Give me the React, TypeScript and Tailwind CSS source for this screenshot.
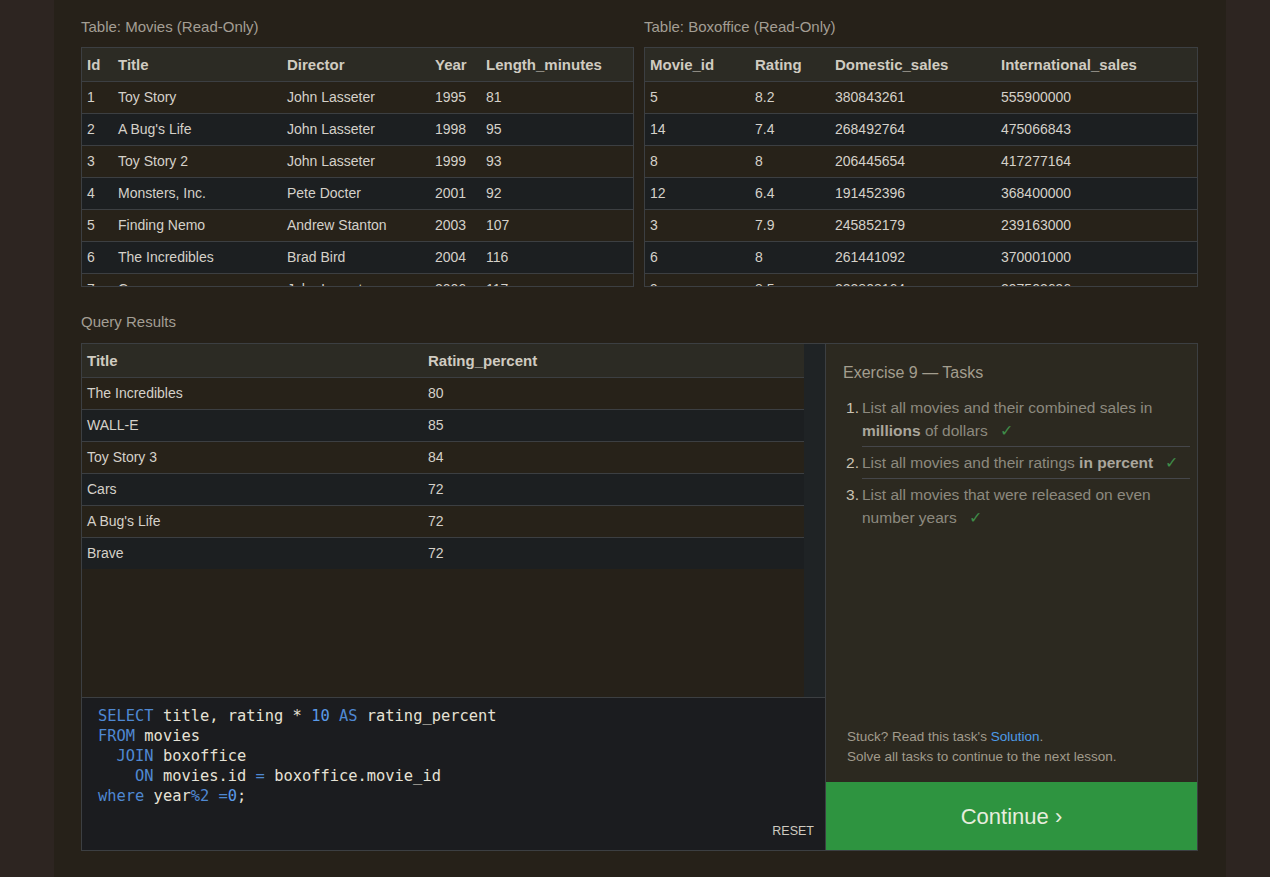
import React from "react";

type Row = (string | number)[];

const movies: Row[] = [
  [1, "Toy Story", "John Lasseter", 1995, 81],
  [2, "A Bug's Life", "John Lasseter", 1998, 95],
  [3, "Toy Story 2", "John Lasseter", 1999, 93],
  [4, "Monsters, Inc.", "Pete Docter", 2001, 92],
  [5, "Finding Nemo", "Andrew Stanton", 2003, 107],
  [6, "The Incredibles", "Brad Bird", 2004, 116],
  [7, "Cars", "John Lasseter", 2006, 117],
];

const boxoffice: Row[] = [
  [5, 8.2, 380843261, 555900000],
  [14, 7.4, 268492764, 475066843],
  [8, 8, 206445654, 417277164],
  [12, 6.4, 191452396, 368400000],
  [3, 7.9, 245852179, 239163000],
  [6, 8, 261441092, 370001000],
  [9, 8.5, 223808164, 297503696],
];

const results: Row[] = [
  ["The Incredibles", 80],
  ["WALL-E", 85],
  ["Toy Story 3", 84],
  ["Cars", 72],
  ["A Bug's Life", 72],
  ["Brave", 72],
];

function DataTable({
  headers,
  rows,
  cols,
}: {
  headers: string[];
  rows: Row[];
  cols: string;
}) {
  return (
    <div className="text-[14px] text-[#d5d1c9]">
      <div className={`grid ${cols} h-[33px] items-center bg-[#2c2b24] pt-[1px] text-[15px] font-bold text-[#d0cbc1]`}>
        {headers.map((h) => (
          <div key={h} className="pl-[5px] whitespace-nowrap">
            {h}
          </div>
        ))}
      </div>
      {rows.map((r, i) => (
        <div
          key={i}
          className={`grid ${cols} h-[32px] items-center border-t border-[#3c3f42] ${
            i % 2 === 0 ? "bg-[#272219]" : "bg-[#1c1f21]"
          }`}
        >
          {r.map((c, j) => (
            <div key={j} className="pl-[5px] whitespace-nowrap">
              {c}
            </div>
          ))}
        </div>
      ))}
    </div>
  );
}

function Check() {
  return <span className="ml-[12px] text-[#3f8c48]">✓</span>;
}

export default function App() {
  return (
    <div
      className="min-h-screen bg-[#2d2521]"
      style={{ fontFamily: '"Liberation Sans", Arial, sans-serif' }}
    >
      <div className="ml-[54px] w-[1172px] min-h-[877px] bg-[#262119] pl-[27px] pr-[28px] pt-[17px]">
        {/* source tables */}
        <div className="flex gap-[10px]">
          <div className="w-[553px]">
            <div className="h-[20px] leading-[20px] text-[15px] text-[#a39e94] mb-[10px]">
              Table: Movies (Read-Only)
            </div>
            <div className="h-[240px] overflow-hidden border border-[#3c3f42]">
              <DataTable
                headers={["Id", "Title", "Director", "Year", "Length_minutes"]}
                rows={movies}
                cols="grid-cols-[31px_169px_148px_51px_1fr]"
              />
            </div>
          </div>
          <div className="w-[554px]">
            <div className="h-[20px] leading-[20px] text-[15px] text-[#a39e94] mb-[10px]">
              Table: Boxoffice (Read-Only)
            </div>
            <div className="h-[240px] overflow-hidden border border-[#3c3f42]">
              <DataTable
                headers={["Movie_id", "Rating", "Domestic_sales", "International_sales"]}
                rows={boxoffice}
                cols="grid-cols-[105px_80px_166px_1fr]"
              />
            </div>
          </div>
        </div>

        {/* query results */}
        <div className="mt-[25px] h-[20px] leading-[20px] text-[15px] text-[#a39e94] mb-[11px]">
          Query Results
        </div>
        <div className="flex h-[508px] w-[1117px]">
          <div className="flex w-[744px] flex-col border-l border-t border-b border-[#3c3f42]">
            <div className="flex flex-1 min-h-0">
              <div className="flex-1 overflow-hidden">
                <DataTable
                  headers={["Title", "Rating_percent"]}
                  rows={results}
                  cols="grid-cols-[341px_1fr]"
                />
              </div>
              <div className="w-[21px] bg-[#1f2325]" />
            </div>
            <div className="relative h-[153px] border-t border-[#3c3f42] bg-[#1b1c1f] pl-[16px] pt-[8px]">
              <pre
                className="text-[15.4px] leading-[20px] text-[#e6e2d6]"
                style={{ fontFamily: '"DejaVu Sans Mono", "Liberation Mono", monospace' }}
              >
                <span className="text-[#4f88d2]">SELECT</span> title, rating *{" "}
                <span className="text-[#5a9ae8]">10</span>{" "}
                <span className="text-[#4f88d2]">AS</span> rating_percent
                {"\n"}
                <span className="text-[#4f88d2]">FROM</span> movies
                {"\n  "}
                <span className="text-[#4f88d2]">JOIN</span> boxoffice
                {"\n    "}
                <span className="text-[#4f88d2]">ON</span> movies.id{" "}
                <span className="text-[#4f88d2]">=</span> boxoffice.movie_id
                {"\n"}
                <span className="text-[#4f88d2]">where</span> year
                <span className="text-[#4f88d2]">%2</span>{" "}
                <span className="text-[#4f88d2]">=</span>
                <span className="text-[#5a9ae8]">0</span>;
              </pre>
              <div className="absolute bottom-[9px] right-[11px] text-[12.5px] text-[#cfcac0]">
                RESET
              </div>
            </div>
          </div>

          {/* tasks */}
          <div className="flex w-[373px] flex-col border border-[#3c3f42] bg-[#2c2920]">
            <div className="pl-[17px] pr-[7px] pt-[17px]">
              <div className="text-[16px] leading-[24px] text-[#a39d8e]">
                Exercise 9 — Tasks
              </div>
              <ol className="mt-[11px] text-[15.5px] leading-[23px] text-[#8d897f]">
                <li className="flex">
                  <span className="w-[16px] shrink-0 text-right text-[#cac3b3]">1.</span>
                  <div className="ml-[3px] flex-1 border-b border-[#45464a] pb-[4px]">
                    List all movies and their combined sales in{" "}
                    <b className="text-[#aaa69c]">millions</b> of dollars
                    <Check />
                  </div>
                </li>
                <li className="flex">
                  <span className="w-[16px] shrink-0 pt-[4px] text-right text-[#cac3b3]">2.</span>
                  <div className="ml-[3px] flex-1 border-b border-[#45464a] py-[4px]">
                    List all movies and their ratings{" "}
                    <b className="text-[#aaa69c]">in percent</b>
                    <Check />
                  </div>
                </li>
                <li className="flex">
                  <span className="w-[16px] shrink-0 pt-[4px] text-right text-[#cac3b3]">3.</span>
                  <div className="ml-[3px] flex-1 py-[4px]">
                    List all movies that were released on even number years
                    <Check />
                  </div>
                </li>
              </ol>
            </div>
            <div className="flex-1" />
            <div className="pl-[21px] pb-[15px] text-[13.5px] leading-[20px] text-[#a19b8c]">
              <div>
                Stuck? Read this task's <span className="text-[#4c9be8]">Solution</span>.
              </div>
              <div>Solve all tasks to continue to the next lesson.</div>
            </div>
            <div className="flex h-[68px] items-center justify-center bg-[#2e9440] text-[22px] text-[#e6eddd]">
              Continue ›
            </div>
          </div>
        </div>
      </div>
    </div>
  );
}
